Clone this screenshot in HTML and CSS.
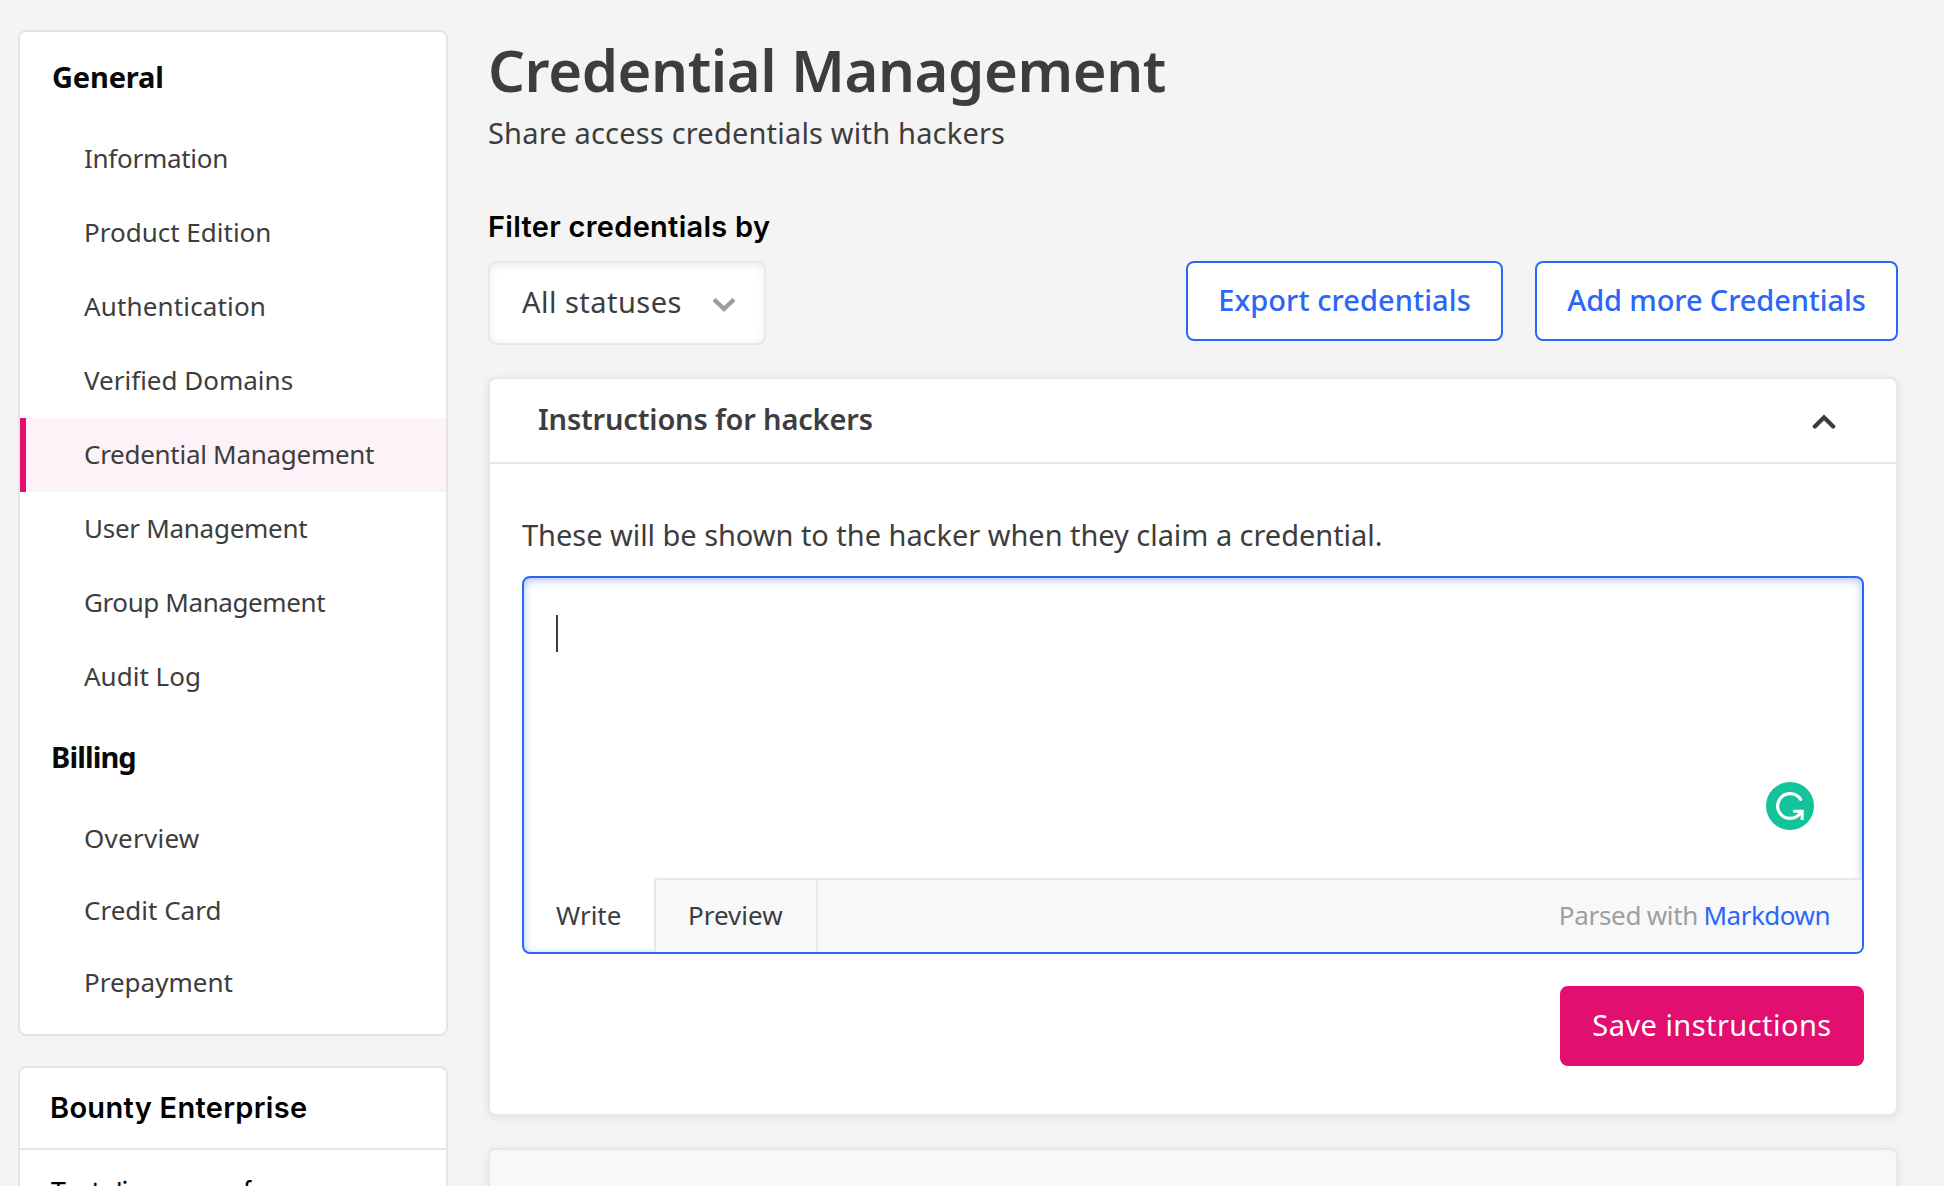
FILE: index.html
```html
<!DOCTYPE html>
<html lang="en">
<head>
<meta charset="utf-8">
<title>Credential Management</title>
<link rel="stylesheet" href="styles.css">
</head>
<body>
<div class="page">
  <aside class="sidebar">
    <nav class="card">
      <h2 class="nav-title">General</h2>
      <ul class="nav-list">
        <li class="nav-item tight">Information</li>
        <li class="nav-item">Product Edition</li>
        <li class="nav-item wide">Authentication</li>
        <li class="nav-item">Verified Domains</li>
        <li class="nav-item tight active">Credential Management</li>
        <li class="nav-item tight">User Management</li>
        <li class="nav-item tighter">Group Management</li>
        <li class="nav-item">Audit Log</li>
      </ul>
      <h2 class="nav-title billing">Billing</h2>
      <ul class="nav-list compact">
        <li class="nav-item wider">Overview</li>
        <li class="nav-item">Credit Card</li>
        <li class="nav-item">Prepayment</li>
      </ul>
    </nav>
    <section class="card">
      <h2 class="plan-title">Bounty Enterprise</h2>
      <p class="plan-text">Test discovery of</p>
    </section>
  </aside>

  <main class="main">
    <h1 class="title">Credential Management</h1>
    <p class="subtitle">Share access credentials with hackers</p>
    <p class="filter-label">Filter credentials by</p>
    <div class="toolbar">
      <div class="select">
        <span>All statuses</span>
        <svg class="chevron" width="24" height="16" viewBox="0 0 24 16" fill="none" stroke="#9e9e9e" stroke-width="4.4"><path d="M2 2.4 12 12 22 2.4"/></svg>
      </div>
      <div class="actions">
        <button class="btn export">Export credentials</button>
        <button class="btn add">Add more Credentials</button>
      </div>
    </div>

    <section class="panel">
      <header class="panel-header">
        <h3 class="panel-title">Instructions for hackers</h3>
        <svg class="collapse" width="24" height="16" viewBox="0 0 24 16" fill="none" stroke="#3d3d3d" stroke-width="4.2" stroke-linecap="round"><path d="M2.8 12.6 12 3.4l9.2 9.2"/></svg>
      </header>
      <div class="panel-body">
        <p class="hint">These will be shown to the hacker when they claim a credential.</p>
        <div class="editor">
          <div class="editor-text">
            <span class="caret"></span>
            <svg class="checker" width="48" height="48" viewBox="0 0 48 48" fill="none" stroke="#fff" stroke-width="3.2"><circle cx="24" cy="24" r="24" fill="#15c39a" stroke="none"/><path stroke-linecap="round" d="M34.6 17.4A12.4 12.4 0 1 0 24 36.4c4.5 0 8.5-2.300 11-6"/><path stroke-width="3" d="M27.200 29.200h9v8.800"/></svg>
          </div>
          <div class="editor-bar">
            <span class="tab current">Write</span>
            <span class="rest">
              <span class="tab other">Preview</span>
              <span class="parsed">Parsed with <a class="link">Markdown</a></span>
            </span>
          </div>
        </div>
        <button class="btn save">Save instructions</button>
      </div>
    </section>
    <section class="panel muted"></section>
  </main>
</div>
</body>
</html>
```
FILE: styles.css
```css
* { box-sizing: border-box; margin: 0; padding: 0; }

body {
  height: 1186px;
  overflow: hidden;
  background: #f4f4f4;
  color: #3d3d3d;
  font: 400 29px/40px "Noto Sans", sans-serif;
}

.page { display: flex; gap: 40px; height: 1186px; padding-left: 18px; }

/* Sidebar */
.sidebar { display: flex; flex-direction: column; gap: 30px; width: 430px; padding-top: 30px; }
.card { background: #fff; border: 2px solid #e4e4e4; border-radius: 8px; }
nav.card { padding-bottom: 15px; }
.nav-title {
  padding: 25px 32px;
  color: #0a0a0a;
  font-size: 29px;
  font-weight: 700;
  line-height: 40px;
  letter-spacing: -0.17px;
}
.nav-title.billing { padding: 23px 31px 26px; letter-spacing: -0.9px; }
.nav-list { list-style: none; }
.nav-item {
  display: flex;
  align-items: center;
  height: 74px;
  padding: 0 0 2px 58px;
  border-left: 6px solid transparent;
  font-size: 26px;
}
.compact .nav-item { height: 72px; }
.nav-item.active { background: #fdf2f8; border-left-color: #e20e70; }
.tight { letter-spacing: -0.28px; }
.tighter { letter-spacing: -0.4px; }
.wide { letter-spacing: 0.15px; }
.wider { letter-spacing: 0.26px; }
.plan-title {
  height: 82px;
  padding-left: 30px;
  border-bottom: 2px solid #e4e4e4;
  color: #000;
  font: 600 29px/80px Inter, sans-serif;
  letter-spacing: 0.3px;
}
.plan-text {
  padding: 22px 30px;
  color: #000;
  font: 400 26px/40px Inter, sans-serif;
  letter-spacing: -0.6px;
}

/* Main column */
.main { width: 1410px; padding-top: 34px; }
.title { font-size: 58px; font-weight: 600; line-height: 72px; letter-spacing: -0.42px; }
.subtitle { margin-top: 7px; letter-spacing: 0.19px; }
.filter-label {
  margin-top: 54px;
  color: #000;
  font: 600 29px/40px Inter, sans-serif;
  letter-spacing: 0.28px;
}
.toolbar { display: flex; justify-content: space-between; margin-top: 14px; }
.select {
  display: flex;
  align-items: center;
  justify-content: space-between;
  width: 278px;
  height: 84px;
  padding: 0 28px 3px 32px;
  background: #fff;
  border: 2px solid #e8e8e8;
  border-radius: 8px;
  box-shadow: inset 0 2px 8px rgba(0, 0, 0, 0.08);
  letter-spacing: 0.47px;
}
.chevron { margin-top: 6px; }
.actions { display: flex; gap: 32px; }
.btn {
  height: 80px;
  padding-bottom: 3px;
  background: #fff;
  border: 2px solid #2b67f6;
  border-radius: 8px;
  color: #2b67f6;
  font: 500 29px/40px "Noto Sans", sans-serif;
}
.export { width: 317px; letter-spacing: 0.07px; }
.add { width: 363px; letter-spacing: -0.11px; }

/* Panels */
.panel {
  margin-top: 32px;
  height: 739px;
  background: #fff;
  border: 2px solid #e8e8e8;
  border-radius: 8px;
  box-shadow: 0 2px 8px rgba(0, 0, 0, 0.08);
}
.panel-header {
  display: flex;
  align-items: center;
  justify-content: space-between;
  height: 85px;
  padding: 0 60px 3px 48px;
  border-bottom: 2px solid #e8e8e8;
}
.panel-title { font-size: 29px; font-weight: 600; letter-spacing: -0.17px; }
.collapse { margin-top: 5px; }
.panel-body { display: flex; flex-direction: column; padding: 51px 32px 0; }
.hint { letter-spacing: -0.04px; }
.editor {
  display: flex;
  flex-direction: column;
  height: 378px;
  margin-top: 21px;
  overflow: hidden;
  border: 2px solid #2b67f6;
  border-radius: 8px;
  box-shadow: inset 0 2px 8px rgba(43, 103, 246, 0.4);
}
.editor-text { position: relative; flex: 1; padding: 37px 32px; }
.caret { display: block; width: 2px; height: 37px; background: #3d3d3d; }
.checker { position: absolute; right: 48px; bottom: 48px; }
.editor-bar { display: flex; height: 74px; font-size: 26px; }
.tab { display: flex; align-items: center; }
.current { width: 130px; padding-left: 32px; }
.rest {
  display: flex;
  flex: 1;
  justify-content: space-between;
  background: #f7f8fa;
  border: 2px solid #e8e8e8;
  border-width: 2px 0 0 2px;
  border-top-left-radius: 3px;
}
.other { width: 162px; padding: 0 0 2px 32px; border-right: 2px solid #e8e8e8; }
.parsed {
  padding: 15px 32px 0 0;
  color: #9e9e9e;
  letter-spacing: -0.3px;
  word-spacing: -1px;
}
.link { color: #2b67f6; letter-spacing: -0.5px; }
.save {
  align-self: flex-end;
  width: 304px;
  margin-top: 32px;
  background: #e20e70;
  border-color: #e20e70;
  color: #fff;
  font-weight: 400;
  letter-spacing: 0.45px;
}
.panel.muted { height: 38px; border-bottom: 0; border-radius: 8px 8px 0 0; background: #f7f8fa; }
```
